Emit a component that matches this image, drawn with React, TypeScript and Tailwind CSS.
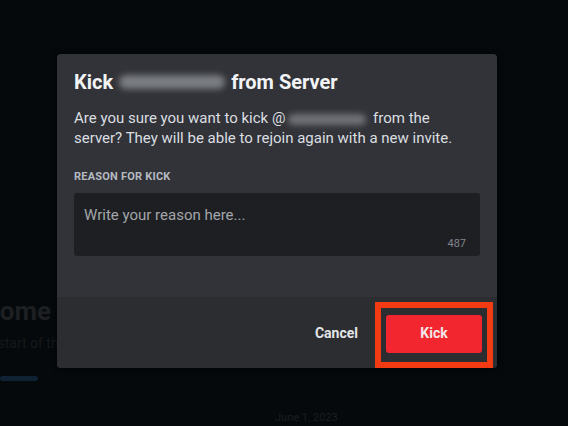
export default function App() {
  return (
    <div
      className="relative w-[568px] h-[426px] overflow-hidden bg-[#05090c]"
      style={{ fontFamily: 'Roboto, "Noto Sans", sans-serif' }}
    >
      {/* page behind the overlay */}
      <div className="flex flex-col pt-[296px] -ml-[57px]">
        <div className="text-[26px] font-bold leading-[30px] text-[#1d1f22] whitespace-nowrap">Welcome to the server</div>
        <div className="mt-[8px] -ml-[13px] text-[14px] leading-[18px] text-[#16181b] whitespace-nowrap">This is the start of the server.</div>
        <div className="mt-[24px] ml-[57px] w-[38px] h-[5px] rounded-sm bg-[#0f2233]" />
        <div className="mt-[31px] ml-[332px] text-[11px] leading-[12px] text-[#1b1e21]">June 1, 2023</div>
      </div>

      {/* modal */}
      <div className="absolute left-[57px] top-[54px] w-[440px] flex flex-col rounded-[4px] overflow-hidden bg-[#313338] shadow-[0_0_6px_rgba(0,0,0,0.6)]">
        <div className="flex flex-col px-[17px] pt-[16px] pb-[41px]">
          <h1 className="flex items-center text-[20px] leading-[24px] font-bold text-[#f2f3f5]">
            Kick
            <span className="mx-[6px] w-[106px] h-[14px] rounded-full bg-[#9a9da2] blur-[3px] opacity-70" />
            from Server
          </h1>
          <p className="mt-[14px] text-[15px] leading-[20px] text-[#dbdee1]">
            Are you sure you want to kick @
            <span className="inline-block align-middle w-[78px] h-[11px] rounded-full bg-[#9a9da2] blur-[3px] opacity-60 mx-[3px]" />
            {' '}from the server? They will be able to rejoin again with a new invite.
          </p>
          <div className="mt-[22px] text-[11px] leading-[14px] font-bold tracking-[0.02em] text-[#b5bac1]">
            REASON FOR KICK
          </div>
          <div className="mt-[9px] h-[63px] rounded-[3px] bg-[#1e1f22] flex flex-col px-[10px] pt-[12px] pb-[6px]">
            <div className="text-[15px] leading-[20px] text-[#a3a6aa]">Write your reason here...</div>
            <div className="mt-auto self-end pr-[4px] text-[11px] leading-[12px] text-[#80848e]">487</div>
          </div>
        </div>
        <div className="h-[71px] bg-[#2b2d31] flex items-center justify-end pr-[15px] pt-[2px]">
          <button className="mr-[28px] text-[14px] font-bold text-[#e3e5e8]">Cancel</button>
          <div className="relative">
            <div className="absolute -left-[11px] -right-[11px] -top-[13px] -bottom-[15px] border-[6px] border-[#f23a13]" />
            <button className="w-[96px] h-[38px] rounded-[3px] bg-[#f2262f] text-[14px] font-bold text-[#f4e6e8]">
              Kick
            </button>
          </div>
        </div>
      </div>
    </div>
  );
}
